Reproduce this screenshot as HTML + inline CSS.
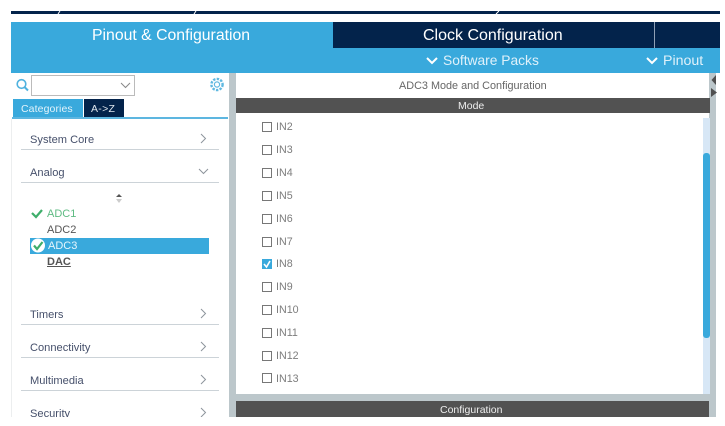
<!DOCTYPE html>
<html>
<head>
<meta charset="utf-8">
<style>
html,body{margin:0;padding:0;background:#fff;}
body{width:725px;height:426px;overflow:hidden;position:relative;font-family:"Liberation Sans",sans-serif;}
#w{left:0;top:0;width:725px;height:426px;filter:blur(.3px);background:#fff;overflow:hidden;}
div,span{position:absolute;white-space:nowrap;}
svg{position:absolute;overflow:visible;}
.cat{font-size:11.1px;color:#46506b;left:30px;line-height:14px;}
.ln{left:21px;width:198px;height:1px;background:#ccd3d8;}
.ck{left:262px;width:8px;height:8px;border:1px solid #777;background:#fff;}
.in{left:276px;font-size:10.7px;color:#7d7d7d;line-height:14px;}
.adc{font-size:11px;line-height:14px;left:47px;color:#555;}
</style>
</head>
<body>
<div id="w">
<div style="left:11px;top:11px;width:709px;height:3px;background:#03234b;"></div>
<svg style="left:0;top:0" width="725" height="20"><path d="M58 14L60 11M194 14L196 11M496 14L499 11" stroke="#fff" stroke-width="1"/></svg>

<div style="left:11px;top:22px;width:709px;height:51px;background:#39a9dc;"></div>
<div style="left:333px;top:22px;width:387px;height:26px;background:#03234b;"></div>
<div style="left:654px;top:22px;width:1px;height:26px;background:#8fa0b5;"></div>
<div style="left:92px;top:26px;font-size:15.8px;line-height:19px;color:#fff;">Pinout &amp; Configuration</div>
<div style="left:423px;top:26px;font-size:16px;line-height:19px;color:#fff;">Clock Configuration</div>
<svg style="left:0;top:0" width="725" height="80" fill="none" stroke="#fff" stroke-width="2"><path d="M427 58L432 63L437 58M647 58L652 63L657 58"/></svg>
<div style="left:443px;top:52px;font-size:13.8px;line-height:17px;color:#dff1fa;">Software Packs</div>
<div style="left:663px;top:53px;font-size:14.2px;line-height:17px;color:#dff1fa;">Pinout</div>

<svg style="left:0;top:0" width="240" height="110" fill="none">
<circle cx="21.500" cy="84" r="4.300" stroke="#4fb2df" stroke-width="1.600"/><path d="M24.500 87L28 90.500" stroke="#4fb2df" stroke-width="2"/>
<circle cx="217" cy="84.500" r="2.600" stroke="#5fb8e0" stroke-width="1.200"/>
<circle cx="217" cy="84.500" r="5.600" stroke="#5fb8e0" stroke-width="2.400" stroke-dasharray="2.400 1.300"/>
</svg>
<div style="left:31px;top:75px;width:102px;height:19px;border:1px solid #bbb;background:#fff;"></div>
<svg style="left:0;top:0" width="240" height="110" fill="none"><path d="M121 83L125.500 87.500L130 83" stroke="#888" stroke-width="1"/></svg>
<div style="left:13px;top:99px;width:70px;height:19px;background:#39a9dc;"></div>
<div style="left:84px;top:99px;width:40px;height:19px;background:#03234b;"></div>
<div style="left:21px;top:102px;font-size:10.5px;letter-spacing:.1px;line-height:14px;color:#e2f3fb;">Categories</div>
<div style="left:91px;top:102px;font-size:10.5px;letter-spacing:.3px;line-height:14px;color:#dfe6ee;">A-&gt;Z</div>
<div style="left:12px;top:117px;width:216px;height:2px;background:#5db6e0;"></div>
<div style="left:11px;top:119px;width:1px;height:298px;background:#eceeef;"></div>

<div class="cat" style="top:133px;">System Core</div><div class="ln" style="top:149px;"></div>
<div class="cat" style="top:166px;">Analog</div><div class="ln" style="top:182px;"></div>
<div class="cat" style="top:308px;">Timers</div><div class="ln" style="top:324px;"></div>
<div class="cat" style="top:341px;">Connectivity</div><div class="ln" style="top:357px;"></div>
<div class="cat" style="top:374px;">Multimedia</div><div class="ln" style="top:390px;"></div>
<div class="cat" style="top:407px;">Security</div>

<svg style="left:0;top:0" width="240" height="426" fill="none" stroke="#8d949c" stroke-width="1">
<path d="M201 134L205.500 138.500L201 143M199 169L203.500 173.500L208 169M201 309L205.500 313.500L201 318M201 342L205.500 346.500L201 351M201 375L205.500 379.500L201 384M201 408L205.500 412.500L201 417"/>
<path d="M116 197L119 194L122 197Z" fill="#555" stroke="none"/><path d="M116 199L119 203L122 199Z" fill="#ccc" stroke="none"/>
</svg>

<svg style="left:0;top:0" width="60" height="260" fill="none"><path d="M32 213L36 217L42 210" stroke="#3fae6b" stroke-width="2.200"/></svg>
<div class="adc" style="top:207px;color:#5fbb83;">ADC1</div>
<div class="adc" style="top:223px;">ADC2</div>
<div style="left:30px;top:238px;width:179px;height:16px;background:#39a9dc;"></div>
<svg style="left:0;top:0" width="60" height="260" fill="none"><circle cx="38" cy="245.500" r="7" fill="#fff"/><path d="M34 245.500L37 249L42.500 242" stroke="#3fae6b" stroke-width="2.200"/></svg>
<div class="adc" style="top:239px;left:48px;color:#e6f5fc;">ADC3</div>
<div class="adc" style="top:255px;font-size:11px;font-weight:bold;text-decoration:underline;color:#555;">DAC</div>

<div style="left:229px;top:73px;width:7px;height:344px;background:#bcc7cb;"></div>
<div style="left:709px;top:73px;width:7px;height:344px;background:#bcc7cb;"></div>
<div style="left:236px;top:73px;width:473px;height:24px;background:#fff;"></div>
<div style="left:399px;top:79px;font-size:10.85px;line-height:14px;color:#666;">ADC3 Mode and Configuration</div>
<div style="left:236px;top:98px;width:474px;height:15px;background:#525252;"></div>
<div style="left:458px;top:100px;font-size:10.5px;line-height:13px;color:#eee;">Mode</div>
<svg style="left:0;top:0" width="725" height="110"><path d="M716 75L711.500 80L716 85Z" fill="#505050"/><path d="M711 88L717 92.500L711 97Z" fill="#505050"/></svg>

<div style="left:703px;top:118px;width:7px;height:276px;background:#d7e7f6;"></div>
<div style="left:703px;top:153px;width:7px;height:185px;background:#39a9dc;border-radius:3px;"></div>

<div class="ck" style="top:122px;"></div><div class="in" style="top:120px;">IN2</div>
<div class="ck" style="top:145px;"></div><div class="in" style="top:143px;">IN3</div>
<div class="ck" style="top:168px;"></div><div class="in" style="top:166px;">IN4</div>
<div class="ck" style="top:191px;"></div><div class="in" style="top:189px;">IN5</div>
<div class="ck" style="top:214px;"></div><div class="in" style="top:212px;">IN6</div>
<div class="ck" style="top:237px;"></div><div class="in" style="top:235px;">IN7</div>
<div class="ck" style="top:259px;background:#39a9dc;border-color:#39a9dc;"></div><div class="in" style="top:257px;">IN8</div>
<svg style="left:0;top:0" width="300" height="280" fill="none"><path d="M264 264L266.500 267L270 261" stroke="#fff" stroke-width="1.600"/></svg>
<div class="ck" style="top:282px;"></div><div class="in" style="top:280px;">IN9</div>
<div class="ck" style="top:305px;"></div><div class="in" style="top:303px;">IN10</div>
<div class="ck" style="top:328px;"></div><div class="in" style="top:326px;">IN11</div>
<div class="ck" style="top:351px;"></div><div class="in" style="top:349px;">IN12</div>
<div class="ck" style="top:373px;"></div><div class="in" style="top:372px;">IN13</div>

<div style="left:229px;top:394px;width:487px;height:7px;background:#bcc7cb;"></div>
<div style="left:236px;top:401px;width:473px;height:16px;background:#525252;"></div>
<div style="left:440px;top:404px;font-size:10.5px;line-height:13px;color:#eee;">Configuration</div>
<div style="left:0;top:417px;width:725px;height:9px;background:#fff;"></div>
</div>
</body>
</html>
